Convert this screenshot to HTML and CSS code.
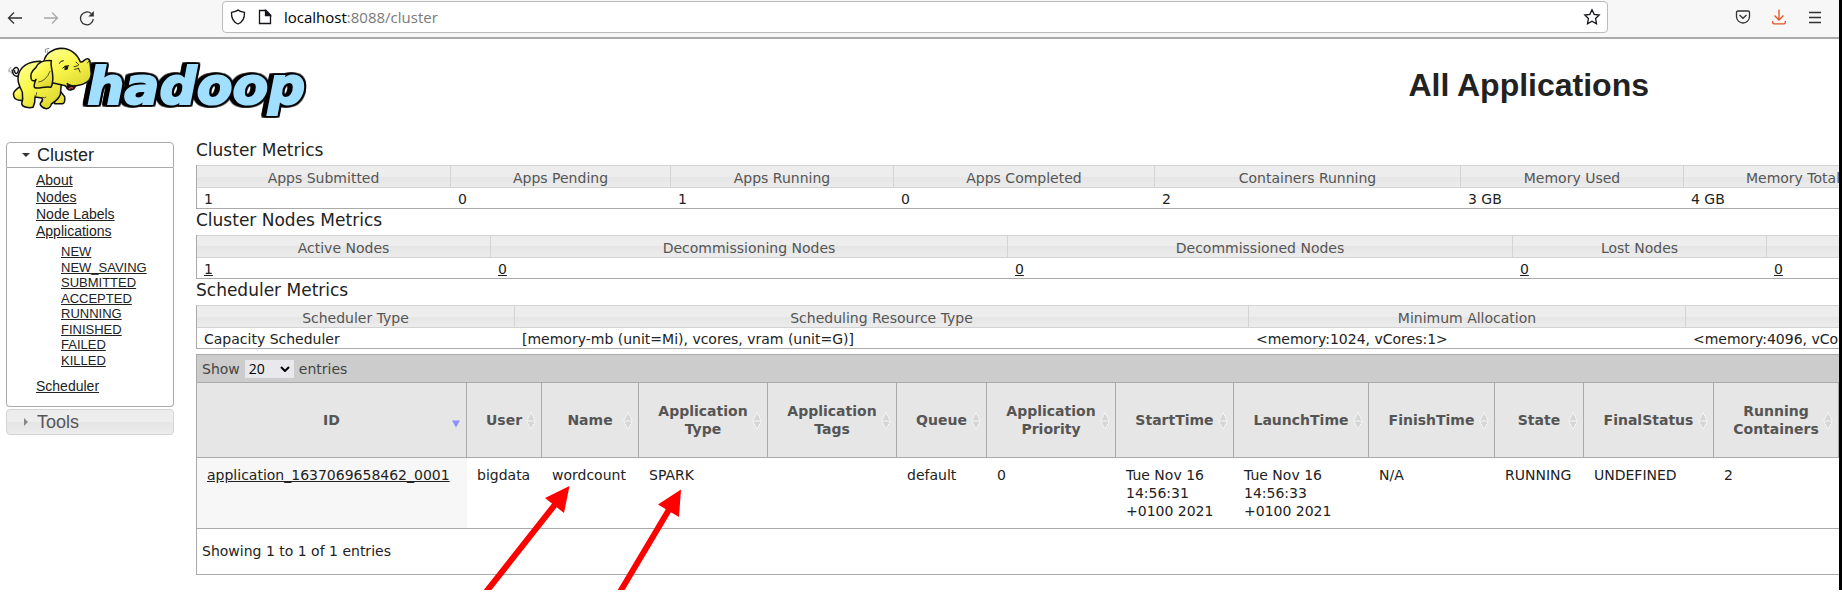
FILE: index.html
```html
<!DOCTYPE html>
<html lang="en">
<head>
<meta charset="utf-8">
<title>All Applications</title>
<link rel="stylesheet" href="styles.css">
</head>
<body>
<svg class="defs" width="0" height="0" aria-hidden="true">
  <defs>
    <symbol id="sort" viewBox="0 0 10 18">
      <path d="M5 1 9 8.500H1zM5 17 1 9.500H9z" fill="#d6d6d6"/>
      <path d="M5 .8 9.300 9 5 17.200.7 9z" fill="none" stroke="#fff" stroke-dasharray="1.500 1"/>
      <path d="M1 9h8" stroke="#eee"/>
    </symbol>
    <linearGradient id="hide" x1="0" y1="0" x2="0.6" y2="1">
      <stop offset="0" stop-color="#ffff9c"/><stop offset=".5" stop-color="#fbf94c"/><stop offset="1" stop-color="#dfd935"/>
    </linearGradient>
  </defs>
</svg>
<div class="screen">
  <div class="toolbar">
    <div class="nav">
      <button type="button" aria-label="Back"><svg width="16" height="16" viewBox="0 0 16 16"><path d="M15 8H1.500M7 2.500 1.500 8 7 13.500"/></svg></button>
      <button type="button" class="off" aria-label="Forward"><svg width="16" height="16" viewBox="0 0 16 16"><path d="M1 8h13.500M9 2.500 14.500 8 9 13.500"/></svg></button>
      <button type="button" aria-label="Reload"><svg width="16" height="16" viewBox="0 0 16 16"><path d="M14.300 9A6.400 6.400 0 1 1 12.200 3.600"/><path d="M14.800 1v5.500H9.300z" fill="#333" stroke="none"/></svg></button>
    </div>
    <div class="address">
      <svg width="16" height="16" viewBox="0 0 16 16"><path d="M8 1C6.500 2.500 4 3 1.500 3.300 1.300 8 3 13 8 15c5-2 6.700-7 6.500-11.700C12 3 9.500 2.500 8 1z"/></svg>
      <svg width="16" height="16" viewBox="0 0 16 16"><path d="M2.500 1.500H9L13.500 6v8.500h-11z"/><path d="M8.500 1.500V6.500h5z" fill="#15141a"/></svg>
      <div class="url"><b>localhost</b>:8088/cluster</div>
      <button type="button" aria-label="Bookmark"><svg width="18" height="18" viewBox="0 0 18 18"><path d="M9 1.800 11.200 6.300 16.200 7 12.600 10.500 13.500 15.700 9 13.200 4.500 15.700 5.400 10.500 1.800 7 6.800 6.300z"/></svg></button>
    </div>
    <div class="tools">
      <button type="button" aria-label="Pocket"><svg width="16" height="16" viewBox="0 0 16 16"><path d="M1.500 3.500q0-1.500 1.500-1.500h10q1.500 0 1.500 1.500V7.500a6.500 6.500 0 0 1-13 0zM4.500 6 8 9.300 11.500 6"/></svg></button>
      <button type="button" class="hot" aria-label="Downloads"><svg width="16" height="16" viewBox="0 0 16 16"><path d="M8 .5V11M3.500 6.500 8 11l4.500-4.500M1.700 12v1.500q0 1.300 1.300 1.300h10q1.300 0 1.300-1.300V12"/></svg></button>
      <button type="button" aria-label="Menu"><svg width="16" height="16" viewBox="0 0 16 16"><path d="M2 3.500h12M2 8.500h12M2 13.500h12"/></svg></button>
    </div>
  </div>

  <header class="banner">
    <svg class="logo" width="306" height="78" viewBox="18 132 918 234" role="img" aria-label="hadoop">
      <text class="word" x="262" y="311">hadoop</text>
      <g fill="url(#hide)" stroke="#111" stroke-width="4.500" stroke-linejoin="round" stroke-linecap="round">
        <path d="M55 228C38 232 34 214 42 206S58 205 54 215 43 220 44 212" fill="none" stroke-width="4"/>
        <path d="M57 262C44 272 36 278 42 291S64 302 76 300L80 268z"/>
        <path d="M172 262 194 290Q196 310 188 311H164L160 280z"/>
        <path d="M122 184C88 184 56 198 54 234 53 250 60 262 67 276Q70 296 65 312C68 323 88 324 99 322Q106 308 105 291L126 294Q130 303 122 308C117 316 130 326 140 326Q152 324 154 312 174 300 181 284L184 250 160 200z"/>
        <path d="M132 184C136 160 160 146 184 145C210 145 232 162 241 186C250 188 254 176 262 176C272 176 270 190 272 206C276 228 272 242 258 248C246 256 234 256 226 258C222 272 208 272 202 266C200 260 196 256 190 256L156 248z"/>
        <path d="M154 182C128 180 116 186 108 202C94 214 90 228 94 238C98 244 104 244 108 238C104 248 98 264 108 264C120 266 138 258 152 262C156 260 160 240 158 224C157 208 150 196 154 182z"/>
        <path d="M202 250C208 256 220 258 226 256C222 270 210 272 204 266z" fill="#181008" stroke-width="3"/>
        <path d="M208 266q5-5 10-2" stroke="#d45" stroke-width="4" fill="none"/>
        <path d="M178 190q4-9 12-8M188 204q6-8 18-7" fill="none" stroke-width="3"/>
        <path d="M196 199l8 1-2 8-7 1z" fill="#111" stroke-width="2"/>
        <path d="M228 186l8 8M222 200l12-3M224 208l12-3M236 206l4 10M262 189l7-7" fill="none" stroke-width="2.500"/>
        <path d="M104 288q5 4 6-10M128 292q8 4 10 0M150 214q-12 30-34 32" fill="none" stroke-width="2"/>
      </g>
      <g fill="none" stroke="#888" stroke-width="3"><path d="M136 158v-10l12-3M142 158v-6M27 217q-2-10 6-15M34 221q-3-9 3-14"/></g>
    </svg>
    <h1>All Applications</h1>
  </header>

  <div class="layout">
    <nav class="side">
      <h3 class="fold open"><svg width="8" height="8" viewBox="0 0 8 8"><path d="M0 2h8L4 6z"/></svg>Cluster</h3>
      <div class="links">
        <ul>
          <li><a href="#">About</a></li>
          <li><a href="#">Nodes</a></li>
          <li><a href="#">Node Labels</a></li>
          <li><a href="#">Applications</a>
            <ul class="states">
              <li><a href="#">NEW</a></li>
              <li><a href="#">NEW_SAVING</a></li>
              <li><a href="#">SUBMITTED</a></li>
              <li><a href="#">ACCEPTED</a></li>
              <li><a href="#">RUNNING</a></li>
              <li><a href="#">FINISHED</a></li>
              <li><a href="#">FAILED</a></li>
              <li><a href="#">KILLED</a></li>
            </ul>
          </li>
          <li><a href="#">Scheduler</a></li>
        </ul>
      </div>
      <h3 class="fold shut"><svg width="8" height="8" viewBox="0 0 8 8"><path d="M2 0v8l4-4z"/></svg>Tools</h3>
    </nav>

    <main class="content">
      <h3 class="caption">Cluster Metrics</h3>
      <table class="metrics cluster">
        <thead><tr><th>Apps Submitted</th><th>Apps Pending</th><th>Apps Running</th><th>Apps Completed</th><th>Containers Running</th><th>Memory Used</th><th>Memory Total</th><th></th></tr></thead>
        <tbody><tr><td>1</td><td>0</td><td>1</td><td>0</td><td>2</td><td>3 GB</td><td>4 GB</td><td></td></tr></tbody>
      </table>
      <h3 class="caption">Cluster Nodes Metrics</h3>
      <table class="metrics nodes">
        <thead><tr><th>Active Nodes</th><th>Decommissioning Nodes</th><th>Decommissioned Nodes</th><th>Lost Nodes</th><th></th></tr></thead>
        <tbody><tr><td><a href="#">1</a></td><td><a href="#">0</a></td><td><a href="#">0</a></td><td><a href="#">0</a></td><td><a href="#">0</a></td></tr></tbody>
      </table>
      <h3 class="caption">Scheduler Metrics</h3>
      <table class="metrics scheduler">
        <thead><tr><th>Scheduler Type</th><th>Scheduling Resource Type</th><th>Minimum Allocation</th><th></th></tr></thead>
        <tbody><tr><td>Capacity Scheduler</td><td>[memory-mb (unit=Mi), vcores, vram (unit=G)]</td><td>&lt;memory:1024, vCores:1&gt;</td><td>&lt;memory:4096, vCores:4&gt;</td></tr></tbody>
      </table>

      <section class="apps">
        <div class="length">
          <label for="len">Show</label>
          <span class="picker"><select id="len"><option>20</option></select><svg width="10" height="6" viewBox="0 0 10 6"><path d="M1 1l4 4 4-4"/></svg></span>
          <span>entries</span>
        </div>
        <table class="list">
          <thead><tr>
            <th>ID<svg class="sorted" width="8" height="8" viewBox="0 0 8 8"><path d="M0 .5h8L4 7.500z" fill="#8b8fff"/></svg></th>
            <th>User<svg><use href="#sort"/></svg></th>
            <th>Name<svg><use href="#sort"/></svg></th>
            <th>Application Type<svg><use href="#sort"/></svg></th>
            <th>Application Tags<svg><use href="#sort"/></svg></th>
            <th>Queue<svg><use href="#sort"/></svg></th>
            <th>Application Priority<svg><use href="#sort"/></svg></th>
            <th>StartTime<svg><use href="#sort"/></svg></th>
            <th>LaunchTime<svg><use href="#sort"/></svg></th>
            <th>FinishTime<svg><use href="#sort"/></svg></th>
            <th>State<svg><use href="#sort"/></svg></th>
            <th>FinalStatus<svg><use href="#sort"/></svg></th>
            <th>Running Containers<svg><use href="#sort"/></svg></th>
            <th></th>
          </tr></thead>
          <tbody><tr>
            <td><a href="#">application_1637069658462_0001</a></td>
            <td>bigdata</td><td>wordcount</td><td>SPARK</td><td></td><td>default</td><td>0</td>
            <td class="time">Tue Nov 16 14:56:31 +0100 2021</td>
            <td class="time">Tue Nov 16 14:56:33 +0100 2021</td>
            <td>N/A</td><td>RUNNING</td><td>UNDEFINED</td><td>2</td><td></td>
          </tr></tbody>
        </table>
        <div class="info">Showing 1 to 1 of 1 entries</div>
      </section>
    </main>
  </div>

  <svg class="arrows" width="220" height="120" viewBox="480 480 220 120" aria-hidden="true">
    <path d="M486 592 557 502M620 592 670 508" stroke="#f00" stroke-width="6"/>
    <path d="M569.500 486 545 498 564 513zM681 489.500 658 504.500 679 517z" fill="#f00"/>
  </svg>
</div>
</body>
</html>
```
FILE: styles.css
```css
* { box-sizing: border-box; }
body { margin: 0; background: #fff; color: #222; font: 14px/18px "DejaVu Sans", sans-serif; }
h1, h3 { margin: 0; font-weight: normal; }
ul { list-style: none; margin: 0; padding: 0; }
a { color: inherit; text-decoration: underline; }
table { border-spacing: 0; border-collapse: separate; table-layout: fixed; }
.defs { position: absolute; }

.screen { position: relative; overflow: hidden; border-right: 3px solid #000; padding-bottom: 15px; }

/* browser chrome */
.toolbar { display: flex; align-items: flex-start; background: #f7f7f7; border-bottom: 2px solid #aaa; height: 39px; padding: 1px 16px 0 7px; }
.toolbar button { display: block; border: 0; padding: 0; background: none; }
.toolbar svg { display: block; fill: none; stroke: #333; stroke-width: 1.3px; }
.nav { display: flex; gap: 20px; width: 215px; padding-top: 9px; }
.off { opacity: .4; }
.address { flex: 1; display: flex; align-items: center; gap: 11px; height: 32px; padding: 0 6px 0 7px; border: 1px solid #bbb; border-radius: 4px; background: #fff; }
.address svg { stroke: #15141a; }
.url { flex: 1; color: #7a7a7a; font: 15px/20px "Open Sans", "Noto Sans", sans-serif; }
.url b { color: #000; font-weight: normal; }
.tools { display: flex; gap: 20px; padding: 8px 0 0 127px; }
.hot svg { stroke: #e8501f; }

/* page header */
.banner { display: flex; justify-content: space-between; padding: 5px 190px 0 6px; height: 100px; }
.logo { display: block; }
.word {
  font: italic bold 156px "DejaVu Sans", sans-serif;
  fill: #a0dfff; stroke: #a0dfff; stroke-width: 6px;
  filter: drop-shadow(5px 0 0 #000) drop-shadow(-5px 0 0 #000) drop-shadow(0 5px 0 #000) drop-shadow(0 -5px 0 #000) drop-shadow(-9px 0 0 #000);
}
h1 { font: bold 32px/36px "Liberation Sans", sans-serif; padding-top: 23px; }

.layout { display: grid; grid-template-columns: 168px minmax(0, 1fr); column-gap: 22px; padding-left: 6px; }

/* sidebar */
.side { padding-top: 3px; font-family: "Liberation Sans", sans-serif; }
.fold { display: flex; align-items: center; gap: 7px; padding-left: 15px; height: 26px; border: 1px solid #aaa; font-size: 18px; line-height: 24px; }
.open { border-radius: 4px 4px 0 0; fill: #333; }
.shut { margin-top: 2px; border-color: #d3d3d3; border-radius: 4px; color: #555; fill: #888; background: linear-gradient(#ededed 50%, #e5e5e5 50%, #ececec); }
.links { border: 1px solid #aaa; border-top: 0; border-radius: 0 0 4px 4px; padding: 4px 0 11px 29px; line-height: 17px; }
.states { padding: 4px 0 10px 25px; font-size: 13px; line-height: 15px; }
.states li:nth-child(odd) { padding-bottom: 1px; }

/* metric tables */
.caption { font-size: 17px; line-height: 22px; padding-bottom: 4px; }
.metrics { width: 120%; border: 1px solid #aaa; border-top: 0; }
.metrics th { height: 23px; padding: 3px 7px 0; line-height: 17px; border: 1px solid #d3d3d3; border-left-width: 0; color: #555; font-weight: normal; background: linear-gradient(#ededed 50%, #e5e5e5 50%, #ececec); }
.metrics td { height: 20px; padding: 1px 7px 0; white-space: nowrap; }
.cluster th:nth-child(1) { width: 254px; }
.cluster th:nth-child(2) { width: 220px; }
.cluster th:nth-child(3) { width: 223px; }
.cluster th:nth-child(4) { width: 261px; }
.cluster th:nth-child(5) { width: 306px; }
.cluster th:nth-child(6) { width: 223px; }
.cluster th:nth-child(7) { width: 219px; }
.nodes th:nth-child(1) { width: 294px; }
.nodes th:nth-child(2) { width: 517px; }
.nodes th:nth-child(3) { width: 505px; }
.nodes th:nth-child(4) { width: 254px; }
.scheduler th:nth-child(1) { width: 318px; }
.scheduler th:nth-child(2) { width: 734px; }
.scheduler th:nth-child(3) { width: 437px; }

/* application list */
.apps { margin-top: 5px; width: 120%; border: 1px solid #aaa; }
.length { display: flex; align-items: center; gap: 5px; height: 27px; padding-left: 5px; background: #ccc; color: #444; }
.picker { position: relative; display: block; }
.picker select { display: block; appearance: none; width: 49px; height: 18px; padding: 0 4px; border: 0; border-radius: 0; background: #e9e9ed; color: #000; font: 14px/18px "Open Sans", sans-serif; }
.picker svg { position: absolute; right: 4px; top: 6px; fill: none; stroke: #000; stroke-width: 2px; pointer-events: none; }
.list { width: 100%; border-top: 1px solid #aaa; border-bottom: 1px solid #aaa; }
.list th { position: relative; height: 75px; padding: 0 18px; border-right: 1px solid #aaa; border-bottom: 1px solid #aaa; background: #e6e6e6; color: #555; }
.list th svg { position: absolute; right: 5px; top: 50%; width: 10px; height: 18px; margin-top: -8px; }
.list th .sorted { height: 8px; margin-top: 0; }
.list td { padding: 8px 9px 8px 10px; vertical-align: top; }
.list td:first-child { background: #f7f7f7; }
.list .time { padding-right: 18px; }
.list th:nth-child(1) { width: 270px; }
.list th:nth-child(2) { width: 75px; }
.list th:nth-child(3) { width: 97px; }
.list th:nth-child(4), .list th:nth-child(5), .list th:nth-child(7) { width: 129px; }
.list th:nth-child(6) { width: 90px; }
.list th:nth-child(8) { width: 118px; }
.list th:nth-child(9) { width: 135px; }
.list th:nth-child(10) { width: 126px; }
.list th:nth-child(11) { width: 89px; }
.list th:nth-child(12) { width: 130px; }
.list th:nth-child(13) { width: 125px; }
.info { padding: 13px 5px 14px; }

/* callouts drawn over the list */
.arrows { position: absolute; left: 480px; top: 480px; }
```
